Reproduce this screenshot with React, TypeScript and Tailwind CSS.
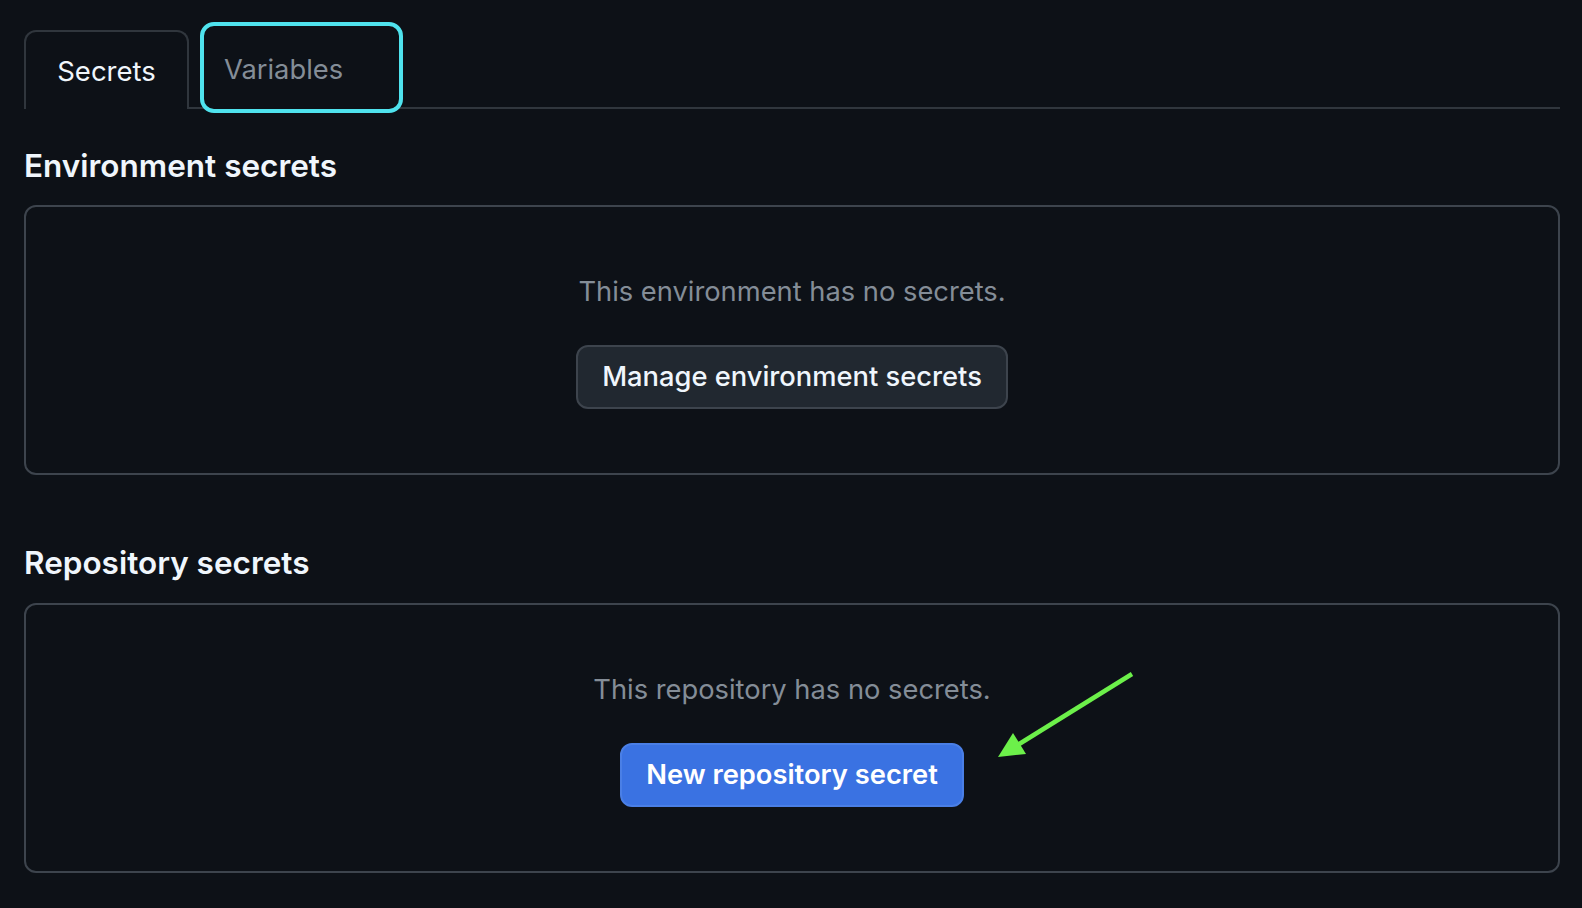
import React from "react";

export default function App() {
  return (
    <div
      className="relative min-h-[908px] w-full bg-[#0d1117] pl-[24px] pr-[22px] pt-[30px]"
      style={{ fontFamily: "Inter, 'Noto Sans', 'Liberation Sans', sans-serif" }}
    >
      {/* Tabs */}
      <div className="flex items-end">
        <div className="h-[79px] w-[165px] rounded-t-[12px] border-2 border-b-0 border-[#30363d] pt-[18px] text-center text-[27.5px] leading-[42px] text-[#f0f6fc]">
          Secrets
        </div>
        <div className="flex h-[79px] flex-1 items-end border-b-2 border-[#30363d]">
          <div className="relative -mb-[6px] ml-[11px] flex h-[91px] w-[203px] items-center rounded-[14px] border-[4px] border-[#4fe3ee] bg-[#0d1117] pl-[20px] pt-[4px] text-[27.3px] leading-[42px] text-[#848d97]">
            Variables
          </div>
        </div>
      </div>

      {/* Environment secrets */}
      <h2 className="mt-[34px] text-[31.5px] font-semibold leading-[46px] text-[#f0f6fc]">
        Environment secrets
      </h2>
      <div className="mt-[16px] flex flex-col items-center rounded-[12px] border-2 border-[#3d444d] py-[64px]">
        <p className="text-[27.3px] leading-[42px] text-[#848d97]">This environment has no secrets.</p>
        <button className="mt-[32px] h-[64px] rounded-[12px] border-2 border-[#3d444d] bg-[#212830] px-[24px] text-[27.3px] font-medium text-[#f0f6fc]">
          Manage environment secrets
        </button>
      </div>

      {/* Repository secrets */}
      <h2 className="mt-[65px] text-[31.5px] font-semibold leading-[46px] text-[#f0f6fc]">
        Repository secrets
      </h2>
      <div className="mt-[17px] flex flex-col items-center rounded-[12px] border-2 border-[#3d444d] py-[64px]">
        <p className="text-[27.3px] leading-[42px] text-[#848d97]">This repository has no secrets.</p>
        <button className="mt-[32px] h-[64px] rounded-[12px] border-2 border-[#4a7fe6] bg-[#3a72e2] px-[24px] text-[27.3px] font-semibold text-white">
          New repository secret
        </button>
      </div>

      {/* Annotation arrow */}
      <svg
        className="pointer-events-none absolute left-0 top-0"
        width="1582"
        height="908"
        viewBox="0 0 1582 908"
      >
        <line x1="1132" y1="674" x2="1016" y2="746" stroke="#6cf04a" strokeWidth="4.5" strokeLinecap="butt" />
        <polygon points="998,757 1013,733 1026,754" fill="#6cf04a" />
      </svg>
    </div>
  );
}
